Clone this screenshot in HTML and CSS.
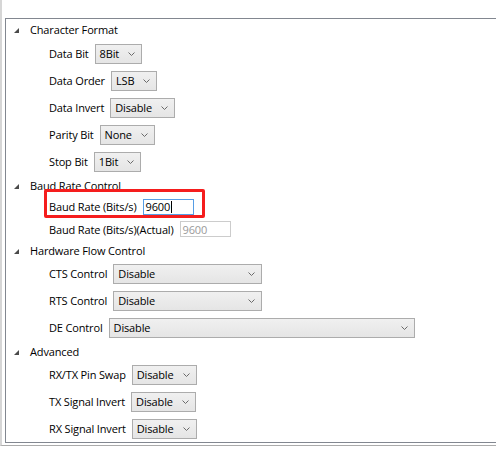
FILE: index.html
```html
<!DOCTYPE html>
<html>
<head>
<meta charset="utf-8">
<link rel="stylesheet" href="styles.css">
</head>
<body>
<div class="frame">
  <div class="panel">
    <div class="title title-first"><span class="tri"></span>Character Format</div>
    <div class="row"><span class="label">Data Bit</span><div class="select"><span class="val">8Bit</span><svg class="chev" width="7" height="4" viewBox="0 0 7 4"><polyline points="0.5,0.5 3.5,3.5 6.5,0.5"/></svg></div></div>
    <div class="row"><span class="label">Data Order</span><div class="select"><span class="val">LSB</span><svg class="chev" width="7" height="4" viewBox="0 0 7 4"><polyline points="0.5,0.5 3.5,3.5 6.5,0.5"/></svg></div></div>
    <div class="row"><span class="label">Data Invert</span><div class="select"><span class="val">Disable</span><svg class="chev" width="7" height="4" viewBox="0 0 7 4"><polyline points="0.5,0.5 3.5,3.5 6.5,0.5"/></svg></div></div>
    <div class="row"><span class="label">Parity Bit</span><div class="select"><span class="val">None</span><svg class="chev" width="7" height="4" viewBox="0 0 7 4"><polyline points="0.5,0.5 3.5,3.5 6.5,0.5"/></svg></div></div>
    <div class="row"><span class="label">Stop Bit</span><div class="select"><span class="val">1Bit</span><svg class="chev" width="7" height="4" viewBox="0 0 7 4"><polyline points="0.5,0.5 3.5,3.5 6.5,0.5"/></svg></div></div>

    <div class="title"><span class="tri"></span>Baud Rate Control</div>
    <div class="row row-baud"><span class="label">Baud Rate (Bits/s)</span><div class="input active"><span>9600</span><span class="caret"></span></div></div>
    <div class="row row-actual"><span class="label">Baud Rate (Bits/s)(Actual)</span><div class="input disabled"><span>9600</span></div></div>

    <div class="title"><span class="tri"></span>Hardware Flow Control</div>
    <div class="row"><span class="label">CTS Control</span><div class="select w-mid"><span class="val">Disable</span><svg class="chev" width="7" height="4" viewBox="0 0 7 4"><polyline points="0.5,0.5 3.5,3.5 6.5,0.5"/></svg></div></div>
    <div class="row"><span class="label">RTS Control</span><div class="select w-mid"><span class="val">Disable</span><svg class="chev" width="7" height="4" viewBox="0 0 7 4"><polyline points="0.5,0.5 3.5,3.5 6.5,0.5"/></svg></div></div>
    <div class="row"><span class="label">DE Control</span><div class="select w-wide"><span class="val">Disable</span><svg class="chev" width="7" height="4" viewBox="0 0 7 4"><polyline points="0.5,0.5 3.5,3.5 6.5,0.5"/></svg></div></div>

    <div class="title"><span class="tri"></span>Advanced</div>
    <div class="row"><span class="label">RX/TX Pin Swap</span><div class="select"><span class="val">Disable</span><svg class="chev" width="7" height="4" viewBox="0 0 7 4"><polyline points="0.5,0.5 3.5,3.5 6.5,0.5"/></svg></div></div>
    <div class="row"><span class="label">TX Signal Invert</span><div class="select"><span class="val">Disable</span><svg class="chev" width="7" height="4" viewBox="0 0 7 4"><polyline points="0.5,0.5 3.5,3.5 6.5,0.5"/></svg></div></div>
    <div class="row"><span class="label">RX Signal Invert</span><div class="select"><span class="val">Disable</span><svg class="chev" width="7" height="4" viewBox="0 0 7 4"><polyline points="0.5,0.5 3.5,3.5 6.5,0.5"/></svg></div></div>
  </div>
  <div class="highlight"></div>
</div>
</body>
</html>
```

FILE: styles.css
```css
html, body {
  margin: 0;
  padding: 0;
  background: #ffffff;
  overflow: hidden;
}

body {
  font-family: "Open Sans", "Noto Sans", sans-serif;
  font-size: 11px;
  letter-spacing: -0.15px;
  color: #000000;
}

.frame {
  position: relative;
  width: 496px;
  height: 446px;
  box-sizing: border-box;
  border-left: 2px solid #d6d6d6;
  border-bottom: 1px solid #ababab;
  padding: 18px 0 2px 3px;
  overflow: hidden;
}

.panel {
  box-sizing: border-box;
  width: 600px;
  height: 425px;
  border: 1px solid #828790;
  border-right: none;
  display: flex;
  flex-direction: column;
}

.title {
  height: 20px;
  display: flex;
  align-items: center;
  white-space: nowrap;
}

.title-first {
  height: 21px;
}

.tri {
  width: 0;
  height: 0;
  border-left: 5px solid transparent;
  border-bottom: 5px solid #4a4a4a;
  margin: 2px 11px 0 8px;
}

.row {
  height: 27px;
  display: flex;
  align-items: center;
  padding-left: 43px;
  white-space: nowrap;
}

.row-baud {
  height: 23px;
}

.row-actual {
  height: 22px;
}

.label {
  margin-right: 6px;
}

.select {
  box-sizing: border-box;
  height: 20px;
  display: flex;
  align-items: center;
  justify-content: space-between;
  padding: 0 6px 0 4px;
  border: 1px solid #acacac;
  background: linear-gradient(#f0f0f0, #e5e5e5);
}

.select .val {
  margin-right: 9px;
}

.chev {
  display: block;
  flex: none;
}

.chev polyline {
  fill: none;
  stroke: #6a6a6a;
  stroke-width: 1;
}

.w-mid {
  width: 149px;
}

.w-wide {
  width: 306px;
}

.input {
  box-sizing: border-box;
  width: 51px;
  height: 16px;
  display: flex;
  align-items: center;
  padding-left: 2px;
  background: #ffffff;
}

.input.active {
  border: 1px solid #569de5;
}

.input.disabled {
  border: 1px solid #cccccc;
  color: #9a9a9a;
}

.caret {
  width: 1px;
  height: 12px;
  background: #000000;
  margin-left: 1px;
}

.highlight {
  position: absolute;
  left: 42px;
  top: 189px;
  width: 161px;
  height: 29px;
  box-sizing: border-box;
  border: 3px solid #f51d1d;
  border-radius: 2px;
}
```
